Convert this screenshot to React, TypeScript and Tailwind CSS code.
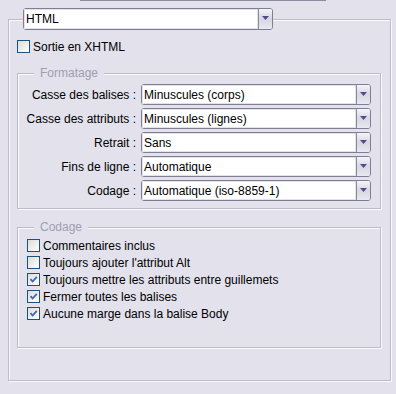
import React from "react";

function Select({ value, width }: { value: string; width: string }) {
  return (
    <div className={`flex h-[21px] ${width} rounded-[3px] border border-[#7f7e93] bg-white`}>
      <div className="flex flex-1 items-center border border-[#e2e1ec] pl-[1px] text-[12px] leading-none text-black">
        {value}
      </div>
      <div className="flex w-[14px] items-center justify-center rounded-r-[2px] border-l border-[#8a899c] bg-gradient-to-b from-[#f4f4f8] via-[#d7d6e2] to-[#e9e9f0]">
        <svg width="7" height="5" viewBox="0 0 7 5" className="-mt-[1px]">
          <path d="M0 0 H7 L3.5 4 Z" fill="#4e4d8c" />
        </svg>
      </div>
    </div>
  );
}

function Checkbox({ checked }: { checked?: boolean }) {
  return (
    <div className="flex h-[13px] w-[13px] shrink-0 items-center justify-center border border-[#1c5180] bg-gradient-to-br from-[#dcdcd6] to-white">
      {checked && (
        <svg width="9" height="9" viewBox="0 0 9 9">
          <path d="M1.5 4.2 L3.6 6.5 L7.8 1.8" fill="none" stroke="#3b63c4" strokeWidth="1.8" />
        </svg>
      )}
    </div>
  );
}

function Legend({ text }: { text: string }) {
  return (
    <div className="-mt-[8px] ml-[16px] w-fit bg-[#e2e1ec] px-[6px] text-[12px] leading-[14px] text-[#a09fb1]">
      {text}
    </div>
  );
}

const etched =
  "border border-[#bcbbc9] shadow-[inset_1px_1px_0_#fbfbfd,1px_1px_0_#fbfbfd]";

export default function App() {
  const rows: [string, string][] = [
    ["Casse des balises :", "Minuscules (corps)"],
    ["Casse des attributs :", "Minuscules (lignes)"],
    ["Retrait :", "Sans"],
    ["Fins de ligne :", "Automatique"],
    ["Codage :", "Automatique (iso-8859-1)"],
  ];
  const checks: [string, boolean][] = [
    ["Commentaires inclus", false],
    ["Toujours ajouter l'attribut Alt", false],
    ["Toujours mettre les attributs entre guillemets", true],
    ["Fermer toutes les balises", true],
    ["Aucune marge dans la balise Body", true],
  ];
  return (
    <div
      className="h-[394px] w-[396px] overflow-hidden bg-[#e2e1ec] text-[12px] text-black"
      style={{ fontFamily: '"Liberation Sans", Arial, sans-serif' }}
    >
      <div className="ml-[80px] h-px w-[246px] bg-[#8d8b9c]" />
      <div className={`ml-[8px] mt-[18px] h-[362px] w-[383px] ${etched}`}>
        <div className="-mt-[12px] ml-[14px]">
          <Select value="HTML" width="w-[250px] h-[22px]" />
        </div>
        <div className="ml-[8px] mt-[10px] flex h-[13px] items-center gap-[3px]">
          <Checkbox />
          <span className="leading-none">Sortie en XHTML</span>
        </div>
        <div className={`ml-[8px] mt-[20px] h-[136px] w-[364px] ${etched}`}>
          <Legend text="Formatage" />
          <div className="mt-[4px] flex flex-col gap-[3px]">
            {rows.map(([l, v]) => (
              <div key={l} className="flex h-[21px] items-center">
                <div className="w-[120px] pr-[2px] text-right leading-none">{l}</div>
                <div className="ml-[3px]">
                  <Select value={v} width="w-[230px]" />
                </div>
              </div>
            ))}
          </div>
        </div>
        <div className={`ml-[8px] mt-[18px] h-[121px] w-[364px] ${etched}`}>
          <Legend text="Codage" />
          <div className="ml-[9px] mt-[3px] flex flex-col">
            {checks.map(([l, c]) => (
              <div key={l} className="flex h-[17px] items-center gap-[3px]">
                <Checkbox checked={c} />
                <span className="leading-none">{l}</span>
              </div>
            ))}
          </div>
        </div>
      </div>
    </div>
  );
}
